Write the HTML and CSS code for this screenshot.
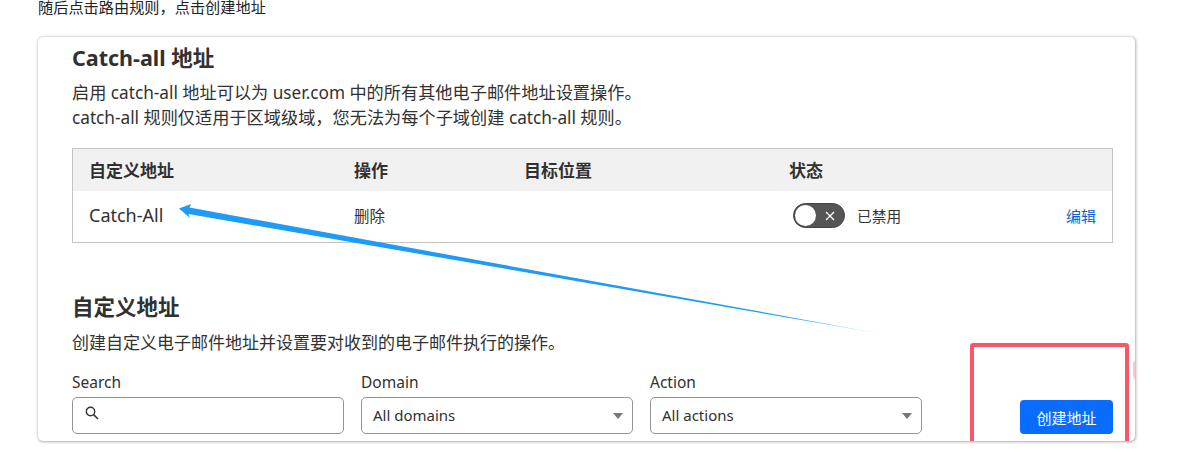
FILE: index.html
```html
<!DOCTYPE html>
<html lang="zh">
<head>
<meta charset="utf-8">
<title>Catch-all 地址</title>
<link rel="stylesheet" href="styles.css">
</head>
<body>
<p class="intro">随后点击路由规则，点击创建地址</p>
<div class="card">
  <h2 class="title">Catch-all 地址</h2>
  <p class="desc">启用 catch-all 地址可以为 user.com 中的所有其他电子邮件地址设置操作。<br>catch-all 规则仅适用于区域级域，您无法为每个子域创建 catch-all 规则。</p>
  <div class="table">
    <div class="row head">
      <div>自定义地址</div><div>操作</div><div>目标位置</div><div>状态</div><div></div>
    </div>
    <div class="row body-row">
      <div class="name">Catch-All</div>
      <div class="del">删除</div>
      <div></div>
      <div class="status">
        <span class="toggle"><span class="knob"></span><svg class="x" width="10" height="10" viewBox="0 0 10 10"><path d="M1 1L9 9M9 1L1 9" stroke="#fff" stroke-width="1.3" fill="none"/></svg></span>
        <span class="small">已禁用</span>
      </div>
      <div class="edit">编辑</div>
    </div>
  </div>
  <h2 class="title second">自定义地址</h2>
  <p class="desc">创建自定义电子邮件地址并设置要对收到的电子邮件执行的操作。</p>
  <div class="filters">
    <div class="field">
      <label class="lbl">Search</label>
      <div class="input">
        <svg width="16" height="16" viewBox="0 0 16 16"><circle cx="6.5" cy="6.5" r="4.2" fill="none" stroke="#333" stroke-width="1.4"/><path d="M9.6 9.6L14 14" stroke="#333" stroke-width="1.5"/></svg>
      </div>
    </div>
    <div class="field">
      <label class="lbl">Domain</label>
      <div class="input select">All domains<span class="caret"></span></div>
    </div>
    <div class="field">
      <label class="lbl">Action</label>
      <div class="input select">All actions<span class="caret"></span></div>
    </div>
    <button class="create">创建地址</button>
  </div>
  <div class="redbox"></div>
  <div class="blob"></div>
</div>
<svg class="arrow" width="1179" height="455" viewBox="0 0 1179 455">
  <defs>
    <linearGradient id="fade" gradientUnits="userSpaceOnUse" x1="180" y1="208" x2="888" y2="335">
      <stop offset="0" stop-color="#1e9bf5"/>
      <stop offset="0.85" stop-color="#1e9bf5"/>
      <stop offset="1" stop-color="#1e9bf5" stop-opacity="0.15"/>
    </linearGradient>
  </defs>
  <path d="M179 208.500L191 204L189.500 207.500L888 335L188.500 214L190 218Z" fill="url(#fade)"/>
</svg>
</body>
</html>
```
FILE: styles.css
```css
* { box-sizing: border-box; }
html, body { margin: 0; padding: 0; background: #fff; }
body {
  width: 1179px;
  height: 455px;
  overflow: hidden;
  position: relative;
  font-family: "Noto Sans", "Noto Sans CJK SC", sans-serif;
  color: #313131;
}
.intro {
  margin: 0 0 0 38px;
  height: 37px;
  font-size: 15.2px;
  line-height: 15px;
  color: #222;
}
.card {
  position: relative;
  margin-left: 38px;
  width: 1097px;
  height: 404px;
  padding: 0 22px 0 34px;
  background: #fff;
  border-radius: 5px;
  box-shadow: 0.5px 0.5px 3px rgba(0,0,0,.32);
  overflow: hidden;
}
.title {
  margin: 4px 0 0;
  font-size: 21.5px;
  line-height: 34px;
  font-weight: 700;
  color: #313131;
}
.desc {
  margin: 5px 0 0;
  font-size: 17.2px;
  line-height: 25px;
}
.table {
  margin-top: 18px;
  border: 1px solid #c4c4c4;
  height: 95px;
}
.row {
  display: grid;
  grid-template-columns: 265px 170px 265px 1fr 60px;
  padding: 0 16px 0 16px;
  align-items: center;
}
.head {
  height: 42px;
  padding-bottom: 2px;
  background: #f1f1f1;
  font-size: 17px;
  font-weight: 700;
}
.body-row { height: 51px; padding-bottom: 3px; }
.name { font-size: 18px; }
.del { font-size: 15.5px; }
.small { font-size: 14.7px; }
.status { display: flex; align-items: center; gap: 12px; margin-left: 4px; }
.toggle {
  position: relative;
  display: block;
  width: 52px;
  height: 25px;
  border-radius: 13px;
  background: #555;
  border: 1px solid #444;
}
.knob {
  position: absolute;
  left: 1px;
  top: 1px;
  width: 21px;
  height: 21px;
  border-radius: 50%;
  background: #fff;
}
.x { position: absolute; left: 31px; top: 7px; }
.edit { font-size: 15px; color: #0a5fc9; text-align: right; }
.second { margin-top: 47px; }
.second + .desc { margin-top: 6px; font-size: 17px; }
.filters {
  display: flex;
  align-items: flex-end;
  gap: 17px;
  margin-top: 15px;
}
.field { width: 272px; }
.lbl { display: block; font-size: 15.5px; line-height: 24px; height: 27px; }
.input {
  height: 37px;
  border: 1px solid #949494;
  border-radius: 5px;
  background: #fff;
  padding: 0 11px;
  font-size: 15px;
  line-height: 35px;
  display: flex;
  align-items: center;
  justify-content: space-between;
}
.caret {
  width: 0;
  height: 0;
  border-left: 5px solid transparent;
  border-right: 5px solid transparent;
  border-top: 6px solid #777;
  margin-right: -2px;
}
.input svg { margin-top: -6px; }
.create {
  margin-left: auto;
  width: 93px;
  height: 34px;
  background: #0a6cff;
  color: #fff;
  border: 0;
  border-radius: 4px;
  font-family: inherit;
  font-size: 15px;
}
.redbox {
  position: absolute;
  left: 932px;
  top: 306px;
  width: 159px;
  height: 110px;
  border: 4px solid #f9566a;
  border-radius: 3px;
}
.blob {
  position: absolute;
  left: 1095px;
  top: 322px;
  width: 6px;
  height: 22px;
  border-radius: 6px 0 0 6px;
  background: #f7c6da;
}
.arrow { position: absolute; left: 0; top: 0; pointer-events: none; }
```
